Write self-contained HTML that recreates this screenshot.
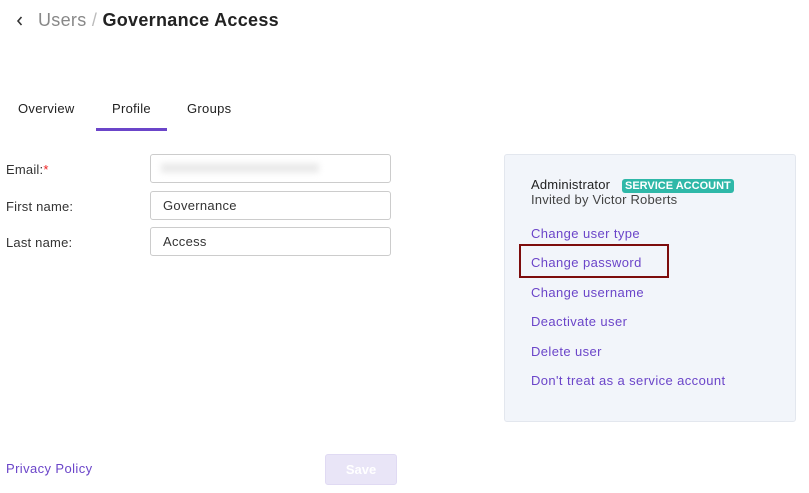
<!DOCTYPE html>
<html><head><style>
body{margin:0;width:809px;height:493px;background:#fff;font-family:"Liberation Sans",sans-serif;position:relative;overflow:hidden;color:#222}
.a{position:absolute;white-space:nowrap}
.lnk{color:#6b45c9;font-size:13px;letter-spacing:0.4px}
.in{position:absolute;left:150px;width:239px;height:27px;border:1px solid #ccc;border-radius:3px;background:#fff}
.in span{position:absolute;left:12px;top:6px;font-size:13px;color:#333;letter-spacing:0.3px}
.lab{font-size:13px;color:#333;letter-spacing:0.2px}
</style></head><body>
<svg class="a" style="left:15px;top:14px" width="10" height="14"><path d="M6.5 3 L3 7 L6.5 11" stroke="#333" stroke-width="1.6" fill="none"/></svg>
<div class="a" style="left:38px;top:10px;font-size:18px;color:#888;letter-spacing:0.3px">Users <span style="color:#bbb">/</span> <span style="color:#222;font-weight:bold">Governance Access</span></div>
<div class="a" style="left:18px;top:101px;font-size:13px;letter-spacing:0.3px">Overview</div>
<div class="a" style="left:112px;top:101px;font-size:13px;letter-spacing:0.3px">Profile</div>
<div class="a" style="left:187px;top:101px;font-size:13px;letter-spacing:0.3px">Groups</div>
<div class="a" style="left:96px;top:128px;width:71px;height:3px;background:#6b45c9"></div>
<div class="a lab" style="left:6px;top:162px">Email:<span style="color:#e22">*</span></div>
<div class="a lab" style="left:6px;top:199px">First name:</div>
<div class="a lab" style="left:6px;top:235px">Last name:</div>
<div class="in" style="top:154px"><div style="position:absolute;left:10px;top:8px;width:158px;height:10px;background:#ebebeb;filter:blur(3px)"></div></div>
<div class="in" style="top:191px"><span>Governance</span></div>
<div class="in" style="top:227px"><span>Access</span></div>
<div class="a" style="left:504px;top:154px;width:290px;height:266px;background:#f2f5fa;border:1px solid #e3e7ee;border-radius:3px"></div>
<div class="a" style="left:531px;top:177px;font-size:13px;letter-spacing:0.2px">Administrator <span style="display:inline-block;margin-left:8px;background:#2fb8a8;color:#fff;font-weight:bold;font-size:11px;padding:1px 3px;border-radius:3px;letter-spacing:0">SERVICE ACCOUNT</span></div>
<div class="a" style="left:531px;top:192px;font-size:13px;color:#444;letter-spacing:0.2px">Invited by Victor Roberts</div>
<div class="a lnk" style="left:531px;top:226px">Change user type</div>
<div class="a" style="left:519px;top:244px;width:146px;height:30px;border:2px solid #7d0c0c"></div>
<div class="a lnk" style="left:531px;top:255px">Change password</div>
<div class="a lnk" style="left:531px;top:285px">Change username</div>
<div class="a lnk" style="left:531px;top:314px">Deactivate user</div>
<div class="a lnk" style="left:531px;top:344px">Delete user</div>
<div class="a lnk" style="left:531px;top:373px">Don't treat as a service account</div>
<div class="a lnk" style="left:6px;top:461px">Privacy Policy</div>
<div class="a" style="left:325px;top:454px;width:70px;height:29px;background:#e9e5f7;border:1px solid #e0daf3;border-radius:3px;color:#fff;font-weight:bold;font-size:13px;text-align:center;line-height:29px">Save</div>
</body></html>
